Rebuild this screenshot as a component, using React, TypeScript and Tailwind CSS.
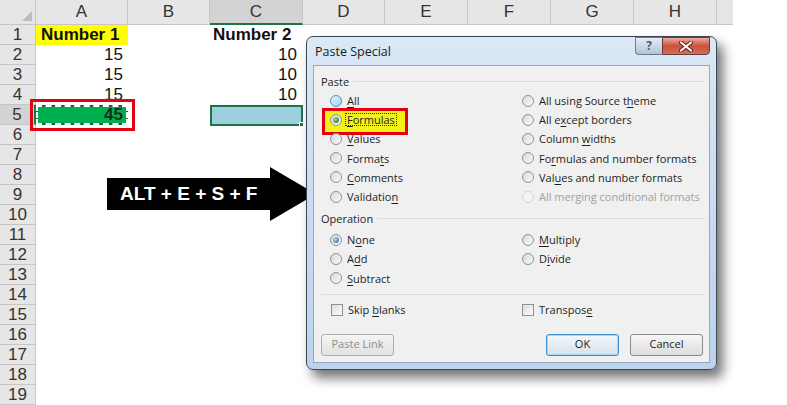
import React from "react"

const cols = ["A", "B", "C", "D", "E", "F", "G", "H"]
const rows = Array.from({ length: 19 }, (_, i) => i + 1)

function Key({ text, at }: { text: string; at?: number }) {
  if (at === undefined) return <span>{text}</span>
  return (
    <span>
      {text.slice(0, at)}
      <span className="underline underline-offset-[2px]">{text[at]}</span>
      {text.slice(at + 1)}
    </span>
  )
}

function Radio({ kind }: { kind?: "hover" | "on" | "green" | "off" }) {
  const ring =
    kind === "off"
      ? "border-[#d4d4d4] bg-[#f3f3f3]"
      : kind === "hover"
      ? "border-[#4f8fbf] bg-gradient-to-br from-[#e3f4fd] to-[#9fd3f1]"
      : "border-[#939393] bg-gradient-to-br from-[#d8d8d8] to-[#fbfbfb]"
  return (
    <span className={`flex w-[12px] h-[12px] shrink-0 items-center justify-center rounded-full border ${ring}`}>
      {kind === "on" && <span className="w-[6px] h-[6px] rounded-full bg-[radial-gradient(circle_at_35%_35%,#a6e3ff,#1b5f99)]" />}
      {kind === "green" && <span className="w-[6px] h-[6px] rounded-full bg-[radial-gradient(circle_at_35%_35%,#9be07a,#2c5a22)]" />}
    </span>
  )
}

type Opt = { t: string; k?: number; kind?: "hover" | "on" | "green" | "off"; focus?: boolean }

function OptRow({ o }: { o: Opt }) {
  return (
    <div className="flex h-[19.2px] items-center gap-[5px]">
      <Radio kind={o.kind} />
      <span
        className={`${o.kind === "off" ? "text-[#a0a0a0]" : "text-[#1e1e1e]"} ${
          o.focus ? "outline outline-1 outline-dotted outline-[#333] px-[1px] -ml-[1px]" : ""
        } leading-none`}
      >
        <Key text={o.t} at={o.k} />
      </span>
    </div>
  )
}

function Group({ label }: { label: string }) {
  return (
    <div className="flex h-[16px] items-center gap-[4px] pl-[7px] pr-[5px]">
      <span className="leading-none">{label}</span>
      <div className="h-px flex-1 bg-[#dcdcdc]" />
    </div>
  )
}

function Check({ text, at }: { text: string; at: number }) {
  return (
    <div className="flex items-center gap-[5px]">
      <span className="w-[12px] h-[12px] border border-[#8f8f8f] bg-gradient-to-br from-[#dedede] to-[#fbfbfb]" />
      <span className="leading-none">
        <Key text={text} at={at} />
      </span>
    </div>
  )
}

const pasteLeft: Opt[] = [
  { t: "All", k: 0, kind: "hover" },
  { t: "Formulas", k: 0, kind: "green", focus: true },
  { t: "Values", k: 0 },
  { t: "Formats", k: 5 },
  { t: "Comments", k: 0 },
  { t: "Validation", k: 9 },
]
const pasteRight: Opt[] = [
  { t: "All using Source theme", k: 18 },
  { t: "All except borders", k: 5 },
  { t: "Column widths", k: 7 },
  { t: "Formulas and number formats", k: 2 },
  { t: "Values and number formats", k: 3 },
  { t: "All merging conditional formats", kind: "off" },
]
const opLeft: Opt[] = [
  { t: "None", k: 1, kind: "on" },
  { t: "Add", k: 1 },
  { t: "Subtract", k: 0 },
]
const opRight: Opt[] = [
  { t: "Multiply", k: 0 },
  { t: "Divide", k: 1 },
]

function Cell({ r, c }: { r: number; c: number }) {
  const base = "h-[20px] flex items-center text-[17px] text-[#111]"
  if (r === 1 && c === 0)
    return <div className={`${base} bg-[#ffff00] pl-[5px] font-bold`}>Number 1</div>
  if (r === 1 && c === 2) return <div className={`${base} pl-[3px] font-bold`}>Number 2</div>
  if (r >= 2 && r <= 4 && c === 0) return <div className={`${base} justify-end pr-[5px]`}>15</div>
  if (r >= 2 && r <= 4 && c === 2) return <div className={`${base} justify-end pr-[6px]`}>10</div>
  if (r === 5 && c === 0)
    return (
      <div className="h-[20px] border-2 border-dashed border-white bg-[#0d6b32]">
        <div className="flex h-full items-center justify-end bg-[#00b050] pr-[3px] text-[17px] font-bold text-[#10301a]">
          45
        </div>
      </div>
    )
  if (r === 5 && c === 2)
    return (
      <div className="relative h-[21px] border-2 border-[#217346] bg-[#9ccfe0]">
        <span className="absolute -right-[3px] -bottom-[3px] w-[5px] h-[5px] bg-[#217346] border border-white" />
      </div>
    )
  return <div className="h-[20px]" />
}

export default function App() {
  return (
    <div className="relative w-[787px] h-[405px] overflow-hidden bg-white font-['Liberation_Sans',Arial,sans-serif]">
      {/* SHEET */}
      <div className="grid w-[733px] grid-cols-[36px_92px_82px_93px_82px_83px_83px_83px_83px_16px] grid-rows-[25px_repeat(19,20px)]">
        <div className="flex items-end justify-end border-b border-r border-[#c6c6c6] bg-[#e6e6e6] p-[3px]">
          <svg width="10" height="10" viewBox="0 0 10 10">
            <polygon points="10,0 10,10 0,10" fill="#bdbdbd" />
          </svg>
        </div>
        {cols.map((c, i) => (
          <div
            key={c}
            className={`flex items-center justify-center border-r text-[17px] text-[#333] ${
              i === 2 ? "border-b-2 border-b-[#217346] border-r-[#c6c6c6] bg-[#d3d3d3]" : "border-b border-[#c6c6c6] bg-[#e6e6e6]"
            }`}
          >
            {c}
          </div>
        ))}
        <div className="border-b border-[#c6c6c6] bg-[#e6e6e6]" />
        {rows.map(r => (
          <React.Fragment key={r}>
            <div
              className={`flex items-center justify-center border-b border-r border-[#c6c6c6] text-[17px] text-[#333] ${
                r === 5 ? "bg-[#d3d3d3] border-r-[#217346] border-r-2" : "bg-[#e6e6e6]"
              }`}
            >
              {r}
            </div>
            {cols.map((c, i) => (
              <Cell key={c} r={r} c={i} />
            ))}
            <div />
          </React.Fragment>
        ))}
      </div>

      {/* red box on A5 */}
      <div className="absolute left-[30px] top-[99px] w-[105px] h-[32px] border-[3px] border-[#e3000f]" />

      {/* ARROW */}
      <div className="absolute left-[107px] top-[167px] flex items-center">
        <div className="flex h-[32px] w-[164px] items-center bg-black pl-[13px] text-[19px] font-bold text-white">
          ALT + E + S + F
        </div>
        <svg width="46" height="54" viewBox="0 0 46 54" className="-ml-px">
          <polygon points="0,0 46,27 0,54" fill="#000" />
        </svg>
      </div>

      {/* DIALOG */}
      <div className="absolute left-[306px] top-[36px] flex w-[411px] h-[334px] flex-col rounded-[7px] border border-[#3b4757] bg-gradient-to-b from-[#dbe8f6] via-[#c9dcf1] to-[#bcd3ee] shadow-[6px_8px_12px_rgba(0,0,0,0.55)] font-['Open_Sans','Noto_Sans',sans-serif] text-[11px] text-[#1e1e1e]">
        <div className="flex h-[28px] items-start justify-between pl-[8px] pr-[6px]">
          <span className="mt-[6px] text-[12.5px] text-[#1a1a1a]">Paste Special</span>
          <div className="flex">
            <div className="flex h-[18px] w-[27px] items-center justify-center rounded-bl-[4px] border border-r-0 border-[#6b7a8c] bg-gradient-to-b from-[#e4ecf5] to-[#b3c4d8] text-[12px] font-bold text-[#4a5a6e]">
              ?
            </div>
            <div className="flex h-[18px] w-[48px] items-center justify-center rounded-br-[4px] border border-[#6b3a3a] bg-gradient-to-b from-[#e9a99b] via-[#c9503c] to-[#d26f5c]">
              <svg width="14" height="11" viewBox="0 0 14 11">
                <path d="M2 1.5 L12 9.5 M12 1.5 L2 9.5" stroke="#5a1f16" strokeWidth="4" strokeLinecap="round" />
                <path d="M2 1.5 L12 9.5 M12 1.5 L2 9.5" stroke="#fff" strokeWidth="2.2" strokeLinecap="round" />
              </svg>
            </div>
          </div>
        </div>

        <div className="relative mx-[6px] flex h-[298px] flex-col border border-[#96a8bf] bg-[#f0f0f0]">
          {/* highlight on Formulas */}
          <div className="absolute left-[8px] top-[42px] w-[86px] h-[27px] border-[3px] border-[#e3000f] bg-[#f2f21a]" />

          <div className="mt-[7px]">
            <Group label="Paste" />
          </div>
          <div className="relative mt-[2px] grid grid-cols-[192px_1fr] pl-[16px]">
            <div>
              {pasteLeft.map(o => (
                <OptRow key={o.t} o={o} />
              ))}
            </div>
            <div>
              {pasteRight.map(o => (
                <OptRow key={o.t} o={o} />
              ))}
            </div>
          </div>

          <div className="mt-[4px]">
            <Group label="Operation" />
          </div>
          <div className="mt-[4px] grid grid-cols-[192px_1fr] pl-[16px]">
            <div>
              {opLeft.map(o => (
                <OptRow key={o.t} o={o} />
              ))}
            </div>
            <div>
              {opRight.map(o => (
                <OptRow key={o.t} o={o} />
              ))}
            </div>
          </div>

          <div className="mx-[7px] mt-[6px] mr-[5px] h-px bg-[#dcdcdc]" />

          <div className="mt-[5px] grid h-[20px] grid-cols-[191px_1fr] items-center pl-[17px]">
            <Check text="Skip blanks" at={5} />
            <Check text="Transpose" at={8} />
          </div>

          <div className="mt-[14px] flex h-[22px] pl-[7px]">
            <div className="flex w-[73px] items-center justify-center rounded-[3px] border border-[#adadad] bg-gradient-to-b from-[#f4f4f4] to-[#e2e2e2] text-[#8d8d8d]">
              Paste Link
            </div>
            <div className="ml-[152px] flex w-[73px] items-center justify-center rounded-[3px] border border-[#3c8ec9] bg-gradient-to-b from-[#f2f7fb] to-[#d8e2ea] shadow-[inset_0_0_0_1px_#a9d6f3]">
              OK
            </div>
            <div className="ml-[11px] flex w-[73px] items-center justify-center rounded-[3px] border border-[#8a8a8a] bg-gradient-to-b from-[#f6f6f6] to-[#dddddd]">
              Cancel
            </div>
          </div>
        </div>
      </div>
    </div>
  )
}
